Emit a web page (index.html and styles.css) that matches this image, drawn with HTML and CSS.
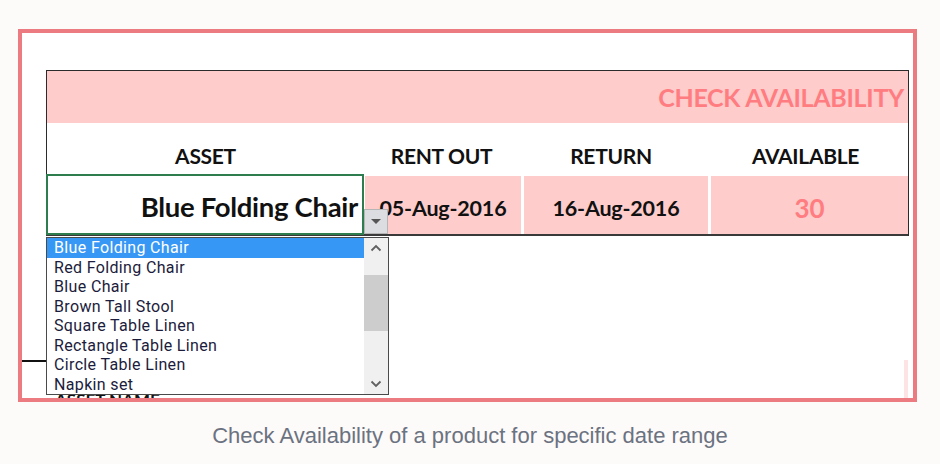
FILE: index.html
```html
<!DOCTYPE html>
<html>
<head>
<meta charset="utf-8">
<link rel="stylesheet" href="styles.css">
</head>
<body>
<div class="frame">
  <div class="sheet">
    <div class="title-row"><span class="title">CHECK AVAILABILITY</span></div>
    <div class="head-row">
      <div class="hcell c-asset">ASSET</div>
      <div class="hcell c-rent">RENT OUT</div>
      <div class="hcell c-ret">RETURN</div>
      <div class="hcell c-avail">AVAILABLE</div>
    </div>
    <div class="data-row">
      <div class="dcell asset-cell">Blue Folding Chair</div>
      <div class="dcell pink c-rent">05-Aug-2016</div>
      <div class="dcell pink c-ret">16-Aug-2016</div>
      <div class="dcell pink c-avail avail">30</div>
    </div>
  </div>
  <div class="sub-table">
    <div class="sub-left"><span class="sub-label">ASSET NAME</span></div>
    <div class="sub-right"></div>
  </div>

  <div class="dd-button"><span class="tri"></span></div>
  <div class="dd-list">
    <ul class="items">
      <li class="sel">Blue Folding Chair</li>
      <li>Red Folding Chair</li>
      <li>Blue Chair</li>
      <li>Brown Tall Stool</li>
      <li>Square Table Linen</li>
      <li>Rectangle Table Linen</li>
      <li>Circle Table Linen</li>
      <li>Napkin set</li>
    </ul>
    <div class="scroll">
      <svg class="chev" width="12" height="8" viewBox="0 0 12 8"><path d="M1.5 6.5 L6 2 L10.5 6.5" fill="none" stroke="#606060" stroke-width="1.8"/></svg>
      <div class="track"><div class="thumb"></div></div>
      <svg class="chev" width="12" height="8" viewBox="0 0 12 8"><path d="M1.5 1.5 L6 6 L10.5 1.5" fill="none" stroke="#606060" stroke-width="1.8"/></svg>
    </div>
  </div>
</div>
<p class="caption">Check Availability of a product for specific date range</p>
</body>
</html>
```

FILE: styles.css
```css
html, body {
  margin: 0;
  padding: 0;
  background: #fdfafa;
}
body {
  width: 940px;
  height: 464px;
  overflow: hidden;
}
.frame {
  position: relative;
  box-sizing: border-box;
  margin: 29px 0 0 18px;
  width: 899px;
  height: 373px;
  border: 4px solid #ec7b81;
  background: #ffffff;
  padding: 37px 4px 0 24px;
  overflow: hidden;
}
.sheet {
  width: 863px;
  box-sizing: border-box;
  border: 1px solid #2b2b2b;
  border-bottom: none;
  font-family: "Lato", "Liberation Sans", sans-serif;
  font-weight: 700;
}
.title-row {
  height: 52px;
  background: #ffcccc;
  display: flex;
  align-items: center;
  justify-content: flex-end;
  padding-right: 4px;
}
.title {
  color: #ff7c80;
  font-size: 25px;
  letter-spacing: -0.3px;
}
.head-row {
  display: flex;
  height: 52px;
  box-sizing: border-box;
  padding-top: 13px;
  align-items: center;
}
.hcell {
  text-align: center;
  font-size: 21px;
  color: #111;
  letter-spacing: -0.3px;
}
.c-asset { width: 317px; }
.c-rent { width: 155px; }
.c-ret { width: 184px; }
.c-avail { flex: 1; }
.data-row {
  display: flex;
  gap: 3px;
  height: 61px;
  box-sizing: border-box;
  border-bottom: 2px solid #3a3a3a;
  margin-left: -1px;
}
.dcell {
  display: flex;
  align-items: center;
  justify-content: center;
  font-size: 21.5px;
  color: #111;
  letter-spacing: -0.2px;
  padding-top: 5px;
  box-sizing: border-box;
}
.pink {
  background: #ffcccc;
  margin-top: 1px;
}
.asset-cell {
  width: 318px;
  border: 2px solid #2e7d4f;
  margin-top: -1px;
  margin-bottom: -1px;
  justify-content: flex-end;
  padding-right: 4px;
  padding-top: 4px;
  font-size: 27.5px;
  letter-spacing: -0.3px;
  margin-right: -3px;
  background: #fff;
}
.data-row .c-rent { width: 156px; margin-left: 1px; }
.data-row .c-ret { width: 184px; }
.avail {
  color: #ff7c80;
  font-size: 26px;
}
.sub-table {
  display: flex;
  margin-top: 124px;
  margin-left: -24px;
  height: 40px;
}
.sub-left {
  width: 367px;
  border-top: 2px solid #111;
  box-sizing: border-box;
  padding: 28px 0 0 33px;
}
.sub-label {
  font-family: "Lato", "Liberation Sans", sans-serif;
  font-weight: 700;
  font-size: 17px;
  line-height: 20px;
  color: #111;
}
.sub-right {
  width: 519px;
  border-right: 4px solid #fde3e4;
  box-sizing: border-box;
}
.dd-button {
  position: absolute;
  left: 342px;
  top: 176px;
  width: 24px;
  height: 25px;
  box-sizing: border-box;
  background: #dcdde0;
  border: 1px solid #b5b5b5;
  display: flex;
  align-items: center;
  justify-content: center;
}
.tri {
  width: 0;
  height: 0;
  border-left: 5px solid transparent;
  border-right: 5px solid transparent;
  border-top: 5px solid #555;
}
.dd-list {
  position: absolute;
  left: 24px;
  top: 204px;
  width: 343px;
  height: 158px;
  box-sizing: border-box;
  border: 1px solid #4a4a4a;
  background: #fff;
  display: flex;
}
.items {
  list-style: none;
  margin: 0;
  padding: 0;
  flex: 1;
  font-family: "Roboto", "Open Sans", sans-serif;
  font-size: 16px;
  letter-spacing: 0.35px;
  color: #1c1c3c;
}
.items li {
  height: 19.5px;
  line-height: 19.5px;
  padding-left: 7px;
  white-space: nowrap;
}
.items li.sel {
  background: #3797f5;
  color: #ffffff;
}
.scroll {
  width: 24px;
  background: #f0f0f0;
  display: flex;
  flex-direction: column;
  align-items: center;
}
.chev {
  display: block;
  margin: 6px 0;
}
.track {
  flex: 1;
  width: 100%;
  padding-top: 17px;
  box-sizing: border-box;
}
.thumb {
  width: 100%;
  height: 56px;
  background: #cdcdcd;
}
.caption {
  margin: 21px 0 0 0;
  text-align: center;
  font-family: "Liberation Sans", Arial, sans-serif;
  font-size: 22px;
  line-height: 26px;
  color: #6b7280;
}
```
